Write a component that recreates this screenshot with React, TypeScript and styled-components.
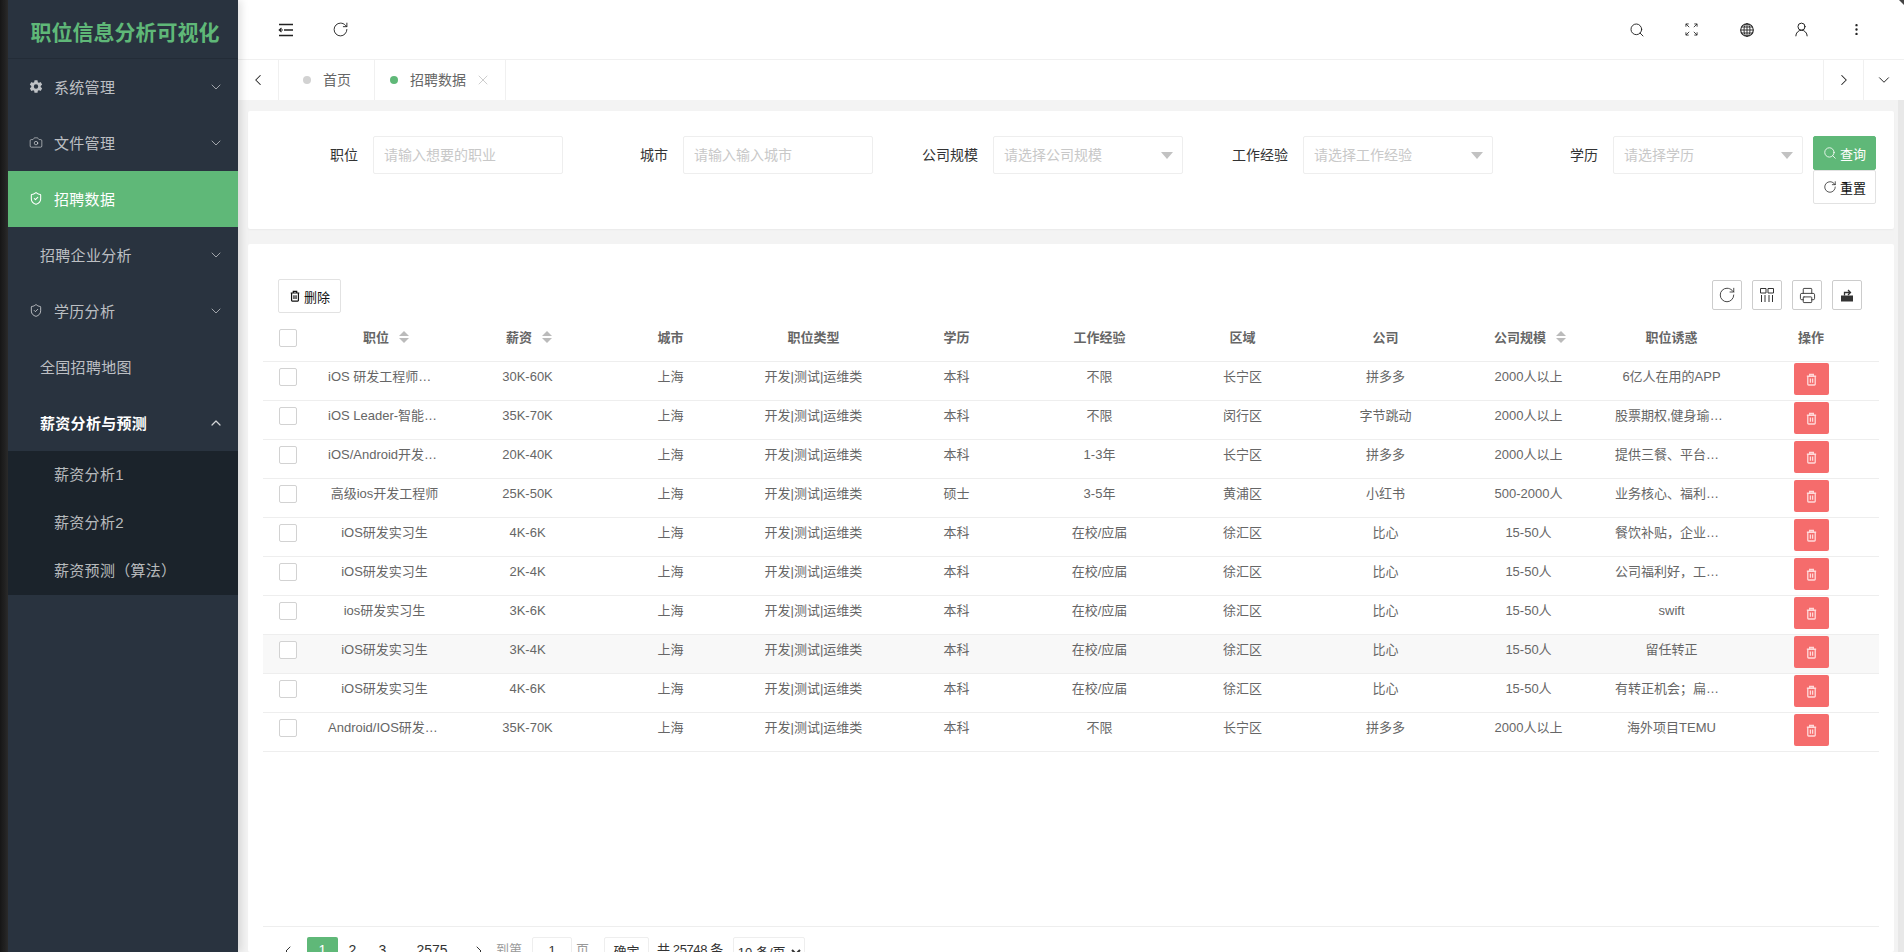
import React from 'react';
import styled, { createGlobalStyle } from 'styled-components';
import { Camera, ChevronDown, ChevronLeft, ChevronRight, ChevronUp, EllipsisVertical, Printer, RotateCw, Search, ShieldCheck, UserRound, X } from 'lucide-react';
import { IoSettingsSharp } from 'react-icons/io5';

const Global = createGlobalStyle`
  html, body { margin: 0; padding: 0; height: 952px; overflow: hidden; background: #fff; }
  * { box-sizing: border-box; }
  body, input, select, button { font-family: "Liberation Sans", "Noto Sans CJK SC", sans-serif; text-spacing-trim: space-all; }
`;

const Page = styled.div`
  position: relative; display: flex; width: 1904px; height: 952px; overflow: hidden;
`;
const Corner = styled.div`
  position: absolute; top: 0; right: 0; width: 5px; height: 5px; background: #444;
  clip-path: polygon(0 0, 100% 0, 100% 100%);
`;
const Strip = styled.div`
  width: 8px; flex: none; background: linear-gradient(90deg, #161616, #2b2b2b);
`;
const Sidebar = styled.aside`
  position: relative; z-index: 2; width: 230px; flex: none; background: #29333f;
  box-shadow: 3px 0 8px rgba(0,0,0,.12);
`;
const Logo = styled.div`
  height: 59px; padding: 16px 0 0 4px; border-bottom: 1px solid #232c37; text-align: center;
  color: #5fb878; font-size: 21px; font-weight: 700; line-height: 34px;
`;
const MenuItem = styled.div<{ $active?: boolean; $open?: boolean; $plain?: boolean }>`
  height: 56px; display: flex; align-items: center; padding: 0 0 2px ${p => (p.$plain ? 32 : 21)}px;
  font-size: 15px; letter-spacing: .3px; position: relative;
  color: ${p => (p.$active || p.$open ? '#fff' : 'rgba(255,255,255,.7)')};
  background: ${p => (p.$active ? '#5fb878' : 'transparent')};
  font-weight: ${p => (p.$open ? 700 : 400)};
`;
const MenuIcon = styled.span`
  width: 14px; height: 14px; margin-right: 11px; display: flex; align-items: center; justify-content: center;
`;
const MenuArrow = styled.span`
  position: absolute; left: 200px; top: 20px; display: flex; opacity: .8;
`;
const SubMenu = styled.div`
  background: #1b232b;
`;
const SubItem = styled.div`
  height: 48px; line-height: 47px; padding-left: 46px; font-size: 15px; letter-spacing: .3px; color: rgba(255,255,255,.7);
`;

const Main = styled.div`
  flex: 1; min-width: 0; display: flex; flex-direction: column; background: #f3f3f3;
`;
const Header = styled.header`
  height: 59px; flex: none; background: #fff; display: flex; align-items: center; justify-content: space-between;
  padding: 0 20px 0 20px;
`;
const HeadGroup = styled.div`
  display: flex; align-items: center; color: #222;
`;
const HeadBtn = styled.span`
  width: 55px; height: 40px; display: flex; align-items: center; justify-content: center;
`;
const TabBar = styled.nav`
  height: 41px; flex: none; display: flex; background: #fff; border-top: 1px solid #f0f0f0;
`;
const TabArrow = styled.span<{ $left?: boolean; $w: number }>`
  width: ${p => p.$w}px; flex: none; display: flex; align-items: center; justify-content: center; color: #222;
  ${p => (p.$left ? 'border-right: 1px solid #f0f0f0;' : 'border-left: 1px solid #f0f0f0;')}
`;
const Tab = styled.div<{ $w: number }>`
  width: ${p => p.$w}px; flex: none; display: flex; align-items: center; padding-left: 24px; gap: 12px;
  color: #666; font-size: 14px; border-right: 1px solid #f0f0f0;
`;
const TabLast = styled(Tab)`
  padding-left: 15px;
`;
const TabLabel = styled.span`
  padding-bottom: 2px;
`;
const Dot = styled.i<{ $on?: boolean }>`
  width: 8px; height: 8px; border-radius: 50%; background: ${p => (p.$on ? '#5fb878' : '#d2d2d2')};
`;
const TabClose = styled.span`
  display: flex; margin-left: -3px; color: #bbb;
`;
const TabSpacer = styled.div`
  flex: 1;
`;

const Body = styled.div`
  flex: 1; min-height: 0; display: flex; background: #f3f3f3;
`;
const Content = styled.div`
  flex: 1; min-width: 0; padding: 11px 4px 0 10px; display: flex; flex-direction: column; gap: 15px;
`;
const ScrollTrack = styled.div`
  width: 6px; flex: none; background: #e8e8e8;
`;
const FilterCard = styled.section`
  height: 118px; flex: none; background: #fff; border-radius: 2px; padding: 25px 0 0 15px; display: flex;
  box-shadow: 0 1px 2px rgba(0,0,0,.04);
`;
const Field = styled.div`
  width: 310px; display: flex; align-items: flex-start;
`;
const FieldLabel = styled.label`
  width: 110px; padding-right: 15px; text-align: right; font-size: 14px; line-height: 38px; color: #333;
`;
const TextInput = styled.input`
  width: 190px; height: 38px; border: 1px solid #eee; border-radius: 2px; padding: 0 10px; font-size: 14px; outline: none;
  background: #fff;
  &::placeholder { color: #c8c8c8; opacity: 1; }
`;
const SelectBox = styled.div`
  position: relative; width: 190px; height: 38px; border: 1px solid #eee; border-radius: 2px; padding: 0 10px;
  font-size: 14px; line-height: 36px; color: #c8c8c8;
  &::after {
    content: ''; position: absolute; right: 9px; top: 15px; border-style: solid; border-width: 7px 6px 0 6px;
    border-color: #c2c2c2 transparent transparent transparent;
  }
`;
const BtnStack = styled.div`
  width: 63px; flex: none; display: flex; flex-direction: column;
`;
const Btn = styled.button<{ $primary?: boolean }>`
  height: 34px; width: 63px; padding: 0; display: flex; align-items: center; justify-content: center; gap: 3px;
  font-size: 13px; border-radius: 2px; cursor: pointer;
  color: ${p => (p.$primary ? '#fff' : '#111')};
  background: ${p => (p.$primary ? '#5fb878' : '#fff')};
  border: 1px solid ${p => (p.$primary ? '#5fb878' : '#e2e2e2')};
`;
const TableCard = styled.section`
  flex: 1; min-height: 0; overflow: hidden; background: #fff; border-radius: 2px; padding: 35px 15px 0 15px; display: flex; flex-direction: column;
`;
const Toolbar = styled.div`
  height: 39px; flex: none; display: flex; justify-content: space-between; padding: 0 17px 0 15px;
`;
const ToolIcons = styled.div`
  display: flex; gap: 10px; padding-top: 1px;
`;
const ToolBtn = styled.span`
  width: 30px; height: 30px; border: 1px solid #ccc; border-radius: 2px; display: flex; align-items: center; justify-content: center; color: #333;
`;
const Row = styled.div<{ $head?: boolean; $hover?: boolean }>`
  display: grid; flex: none; grid-template-columns: 50px repeat(10, 143px) 136px; height: ${p => (p.$head ? 44 : 39)}px;
  border-bottom: 1px solid #eee; background: ${p => (p.$hover ? '#f8f8f8' : '#fff')};
  align-items: start;
`;
const Check = styled.span<{ $head?: boolean }>`
  display: block; width: 18px; height: 18px; margin: ${p => (p.$head ? 11 : 6)}px 0 0 16px; border: 1px solid #d2d2d2; border-radius: 2px; background: #fff;
`;
const Cell = styled.div`
  padding: 4px 15px 0; line-height: 22px; font-size: 13px; color: #666; text-align: center;
  white-space: nowrap; overflow: hidden; text-overflow: ellipsis;
`;
const HeadCell = styled.div<{ $sort?: boolean }>`
  display: flex; justify-content: center; align-items: center; gap: 10px; height: 36px;
  padding-left: ${p => (p.$sort ? 3 : 0)}px;
  font-size: 13px; font-weight: 700; color: #666;
`;
const Sort = styled.span`
  display: flex; flex-direction: column; gap: 2px; margin-top: 2px;
  &::before, &::after { content: ''; border-style: solid; border-color: transparent; }
  &::before { border-width: 0 5px 5px 5px; border-bottom-color: #bbb; }
  &::after { border-width: 5px 5px 0 5px; border-top-color: #bbb; }
`;
const DangerBtn = styled.button`
  width: 35px; height: 32px; margin: 1px 0 0 51px; border: 0; padding: 0; border-radius: 2px; background: #f56c6c;
  display: flex; align-items: center; justify-content: center; color: #ffd9d9;
`;
const Spacer = styled.div`
  flex: none; height: 174px;
`;
const Pager = styled.div`
  flex: none; height: 60px; border-top: 1px solid #eee; padding: 10px 0 0 10px; display: flex; align-items: flex-start;
  font-size: 14px; color: #333; line-height: 26px;
`;
const PageItem = styled.span<{ $w: number; $on?: boolean }>`
  width: ${p => p.$w}px; height: 30px; flex: none; display: flex; justify-content: center; align-items: flex-start;
  color: ${p => (p.$on ? '#fff' : '#333')}; background: ${p => (p.$on ? '#5fb878' : 'transparent')};
  border-radius: 2px 2px 0 0;
`;
const PageArrow = styled(PageItem)`
  padding-top: 6px;
`;
const PagerText = styled.span<{ $ml: number; $muted?: boolean; $tight?: boolean }>`
  margin-left: ${p => p.$ml}px; flex: none; font-size: 13px; color: ${p => (p.$muted ? '#999' : '#333')};
  letter-spacing: ${p => (p.$tight ? '-.4px' : '0')};
`;
const JumpInput = styled.input`
  width: 40px; height: 30px; margin-left: 10px; border: 1px solid #eee; border-radius: 2px; text-align: center; font-size: 13px; color: #333; padding: 0 0 4px;
`;
const OkBtn = styled.button`
  width: 45px; height: 30px; margin-left: 15px; border: 1px solid #eee; border-radius: 2px; background: #fff; font-size: 13px; color: #333; padding: 0 0 4px;
`;
const SizeSelect = styled.select`
  width: 72px; height: 30px; margin-left: 10px; border: 1px solid #eee; border-radius: 2px; background: #fff; font-size: 13px; color: #333;
`;

const Trash = ({ size = 14 }: { size?: number }) => (
  <svg width={size} height={size} viewBox="0 0 14 14" fill="none" stroke="currentColor" strokeWidth="1.4">
    <path d="M2 3.5h10M5 3.3V1.6h4v1.7M3 3.5v8.6c0 .5.3.8.8.8h6.4c.5 0 .8-.3.8-.8V3.5" />
    <path d="M5.800 6v4.500M8.200 6v4.500" />
  </svg>
);
const Shrink = () => (
  <svg width="16" height="14" viewBox="0 0 16 14" stroke="currentColor" strokeWidth="1.6" fill="none">
    <path d="M1 1.500h14M6 7h9M1 12.500h14" />
    <path d="M1 7h4M3.500 5 1.200 7l2.300 2" strokeWidth="1.100" />
  </svg>
);
const Expand = () => (
  <svg width="13" height="13" viewBox="0 0 14 14" stroke="currentColor" strokeWidth=".9" fill="none">
    <path d="M1 4V1h3M1 1l3.500 3.500M10 1h3v3M13 1 9.500 4.500M1 10v3h3M1 13l3.500-3.500M10 13h3v-3M13 13 9.500 9.500" />
  </svg>
);
const GlobeIcon = () => (
  <svg width="14" height="14" viewBox="0 0 14 14" stroke="currentColor" strokeWidth=".9" fill="none">
    <circle cx="7" cy="7" r="6.300" strokeWidth="1.100" />
    <ellipse cx="7" cy="7" rx="3" ry="6.300" />
    <path d="M7 .7v12.600M.7 7h12.600M1.500 4h11M1.500 10h11" />
  </svg>
);
const ColumnsIcon = () => (
  <svg width="14" height="14" viewBox="0 0 14 14" stroke="currentColor" strokeWidth="1" fill="none">
    <path d="M.500.500H6v4.500H.500zM8 .500h5.500v4.500H8zM1.500 7v7M5 7v7M9 7v7M12.500 7v7" />
  </svg>
);
const ExportIcon = () => (
  <svg width="14" height="14" viewBox="0 0 14 14">
    <path d="M1 7.500h12V13.500H1z" fill="currentColor" />
    <path d="M4.500 7.500V4.500h5.500M8 2l2.500 2.500L8 7" stroke="currentColor" strokeWidth="1.300" fill="none" />
  </svg>
);

type Item = string[];
const base = ['上海', '开发|测试|运维类'];
const rows: Item[] = [
  ['iOS 研发工程师（上海）职位', '30K-60K', ...base, '本科', '不限', '长宁区', '拼多多', '2000人以上', '6亿人在用的APP'],
  ['iOS Leader-智能创作方向工程师', '35K-70K', ...base, '本科', '不限', '闵行区', '字节跳动', '2000人以上', '股票期权,健身瑜伽,免费三餐'],
  ['iOS/Android开发工程师方向', '20K-40K', ...base, '本科', '1-3年', '长宁区', '拼多多', '2000人以上', '提供三餐、平台大、成长快'],
  ['高级ios开发工程师', '25K-50K', ...base, '硕士', '3-5年', '黄浦区', '小红书', '500-2000人', '业务核心、福利好、氛围好'],
  ['iOS研发实习生', '4K-6K', ...base, '本科', '在校/应届', '徐汇区', '比心', '15-50人', '餐饮补贴，企业文化好，氛围好'],
  ['iOS研发实习生', '2K-4K', ...base, '本科', '在校/应届', '徐汇区', '比心', '15-50人', '公司福利好，工作氛围好，成长快'],
  ['ios研发实习生', '3K-6K', ...base, '本科', '在校/应届', '徐汇区', '比心', '15-50人', 'swift'],
  ['iOS研发实习生', '3K-4K', ...base, '本科', '在校/应届', '徐汇区', '比心', '15-50人', '留任转正'],
  ['iOS研发实习生', '4K-6K', ...base, '本科', '在校/应届', '徐汇区', '比心', '15-50人', '有转正机会；扁平化管理氛围'],
  ['Android/IOS研发工程师方向', '35K-70K', ...base, '本科', '不限', '长宁区', '拼多多', '2000人以上', '海外项目TEMU'],
];
const heads: [string, boolean][] = [
  ['职位', true], ['薪资', true], ['城市', false], ['职位类型', false], ['学历', false], ['工作经验', false],
  ['区域', false], ['公司', false], ['公司规模', true], ['职位诱惑', false],
];
const selects: [string, string][] = [['公司规模', '请选择公司规模'], ['工作经验', '请选择工作经验'], ['学历', '请选择学历']];

const Down = () => <MenuArrow><ChevronDown size={16} strokeWidth={1.5} /></MenuArrow>;

export default function App() {
  return (
    <Page>
      <Global />
      <Corner />
      <Strip />
      <Sidebar>
        <Logo>职位信息分析可视化</Logo>
        <MenuItem>
          <MenuIcon><IoSettingsSharp size={15} /></MenuIcon>系统管理
          <Down />
        </MenuItem>
        <MenuItem>
          <MenuIcon><Camera size={15} strokeWidth={1.3} /></MenuIcon>文件管理
          <Down />
        </MenuItem>
        <MenuItem $active>
          <MenuIcon><ShieldCheck size={17} strokeWidth={1.8} /></MenuIcon>招聘数据
        </MenuItem>
        <MenuItem $plain>
          招聘企业分析
          <Down />
        </MenuItem>
        <MenuItem>
          <MenuIcon><ShieldCheck size={17} strokeWidth={1.6} /></MenuIcon>学历分析
          <Down />
        </MenuItem>
        <MenuItem $plain>全国招聘地图</MenuItem>
        <MenuItem $plain $open>
          薪资分析与预测
          <MenuArrow><ChevronUp size={16} strokeWidth={1.8} /></MenuArrow>
        </MenuItem>
        <SubMenu>
          <SubItem>薪资分析1</SubItem>
          <SubItem>薪资分析2</SubItem>
          <SubItem>薪资预测（算法）</SubItem>
        </SubMenu>
      </Sidebar>
      <Main>
        <Header>
          <HeadGroup>
            <HeadBtn><Shrink /></HeadBtn>
            <HeadBtn><RotateCw size={17} strokeWidth={1.3} /></HeadBtn>
          </HeadGroup>
          <HeadGroup>
            <HeadBtn><Search size={16} strokeWidth={1.4} /></HeadBtn>
            <HeadBtn><Expand /></HeadBtn>
            <HeadBtn><GlobeIcon /></HeadBtn>
            <HeadBtn><UserRound size={17} strokeWidth={1.4} /></HeadBtn>
            <HeadBtn><EllipsisVertical size={15} strokeWidth={1.8} /></HeadBtn>
          </HeadGroup>
        </Header>
        <TabBar>
          <TabArrow $left $w={41}><ChevronLeft size={18} strokeWidth={1.4} /></TabArrow>
          <Tab $w={96}><Dot /><TabLabel>首页</TabLabel></Tab>
          <TabLast $w={131}><Dot $on /><TabLabel>招聘数据</TabLabel><TabClose><X size={16} strokeWidth={1.1} /></TabClose></TabLast>
          <TabSpacer />
          <TabArrow $w={40}><ChevronRight size={18} strokeWidth={1.4} /></TabArrow>
          <TabArrow $w={41}><ChevronDown size={18} strokeWidth={1.3} /></TabArrow>
        </TabBar>
        <Body>
          <Content>
            <FilterCard>
              <Field>
                <FieldLabel>职位</FieldLabel>
                <TextInput placeholder="请输入想要的职业" readOnly />
              </Field>
              <Field>
                <FieldLabel>城市</FieldLabel>
                <TextInput placeholder="请输入输入城市" readOnly />
              </Field>
              {selects.map(([label, hint]) => (
                <Field key={label}>
                  <FieldLabel>{label}</FieldLabel>
                  <SelectBox>{hint}</SelectBox>
                </Field>
              ))}
              <BtnStack>
                <Btn $primary><Search size={14} strokeWidth={1.4} />查询</Btn>
                <Btn><RotateCw size={14} strokeWidth={1.2} />重置</Btn>
              </BtnStack>
            </FilterCard>
            <TableCard>
              <Toolbar>
                <Btn><Trash size={12} />删除</Btn>
                <ToolIcons>
                  <ToolBtn><RotateCw size={18} strokeWidth={1.2} /></ToolBtn>
                  <ToolBtn><ColumnsIcon /></ToolBtn>
                  <ToolBtn><Printer size={17} strokeWidth={1.3} /></ToolBtn>
                  <ToolBtn><ExportIcon /></ToolBtn>
                </ToolIcons>
              </Toolbar>
              <Row $head>
                <Check $head />
                {heads.map(([name, sort]) => (
                  <HeadCell key={name} $sort={sort}>{name}{sort && <Sort />}</HeadCell>
                ))}
                <HeadCell>操作</HeadCell>
              </Row>
              {rows.map((r, i) => (
                <Row key={i} $hover={i === 7}>
                  <Check />
                  {r.map((c, j) => <Cell key={j}>{c}</Cell>)}
                  <DangerBtn><Trash size={13} /></DangerBtn>
                </Row>
              ))}
              <Spacer />
              <Pager>
                <PageArrow $w={30}><ChevronLeft size={16} strokeWidth={1.5} /></PageArrow>
                <PageItem $w={4} />
                <PageItem $w={31} $on>1</PageItem>
                <PageItem $w={29}>2</PageItem>
                <PageItem $w={31}>3</PageItem>
                <PageItem $w={68}>2575</PageItem>
                <PageArrow $w={26}><ChevronRight size={16} strokeWidth={1.5} /></PageArrow>
                <PagerText $ml={4} $muted>到第</PagerText>
                <JumpInput defaultValue="1" readOnly />
                <PagerText $ml={4} $muted>页</PagerText>
                <OkBtn>确定</OkBtn>
                <PagerText $ml={8} $tight>共 25748 条</PagerText>
                <SizeSelect defaultValue="10">
                  <option value="10">10 条/页</option>
                </SizeSelect>
              </Pager>
            </TableCard>
          </Content>
          <ScrollTrack />
        </Body>
      </Main>
    </Page>
  );
}
